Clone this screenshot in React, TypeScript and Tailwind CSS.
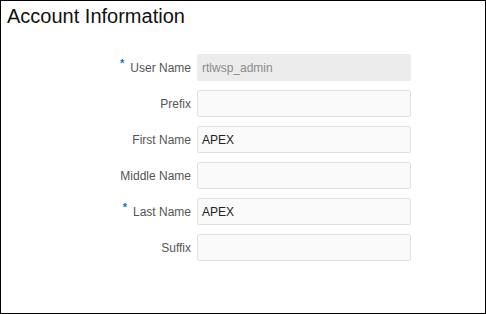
const rows: { label: string; value: string; required?: boolean; disabled?: boolean }[] = [
  { label: "User Name", value: "rtlwsp_admin", required: true, disabled: true },
  { label: "Prefix", value: "" },
  { label: "First Name", value: "APEX" },
  { label: "Middle Name", value: "" },
  { label: "Last Name", value: "APEX", required: true },
  { label: "Suffix", value: "" },
]

export default function App() {
  return (
    <div
      className="w-[486px] h-[314px] border border-black bg-white overflow-hidden"
      style={{ fontFamily: '"Liberation Sans", Arial, sans-serif' }}
    >
      <h1 className="pl-[6px] pt-[3px] text-[20px] leading-[24px] text-[#111]">
        Account Information
      </h1>
      <div className="mt-[26px] flex flex-col gap-[9px]">
        {rows.map((r) => (
          <div key={r.label} className="flex items-center h-[27px]">
            <div className="w-[196px] flex justify-end items-start pr-[6px]">
              {r.required && (
                <span className="text-[#1a6fb5] text-[11px] leading-none mr-[6px] -mt-[4px] font-bold">*</span>
              )}
              <span className="text-[12px] text-[#555] leading-none">{r.label}</span>
            </div>
            <div
              className={
                r.disabled
                  ? "w-[214px] h-[27px] bg-[#ececec] border border-[#ececec] rounded-[2px] flex items-center pl-[4px] text-[12px] text-[#8a8a8a]"
                  : "w-[214px] h-[27px] bg-[#fafafa] border border-[#e0e0e0] rounded-[2px] flex items-center pl-[4px] text-[12px] text-[#222]"
              }
            >
              {r.value}
            </div>
          </div>
        ))}
      </div>
    </div>
  )
}
